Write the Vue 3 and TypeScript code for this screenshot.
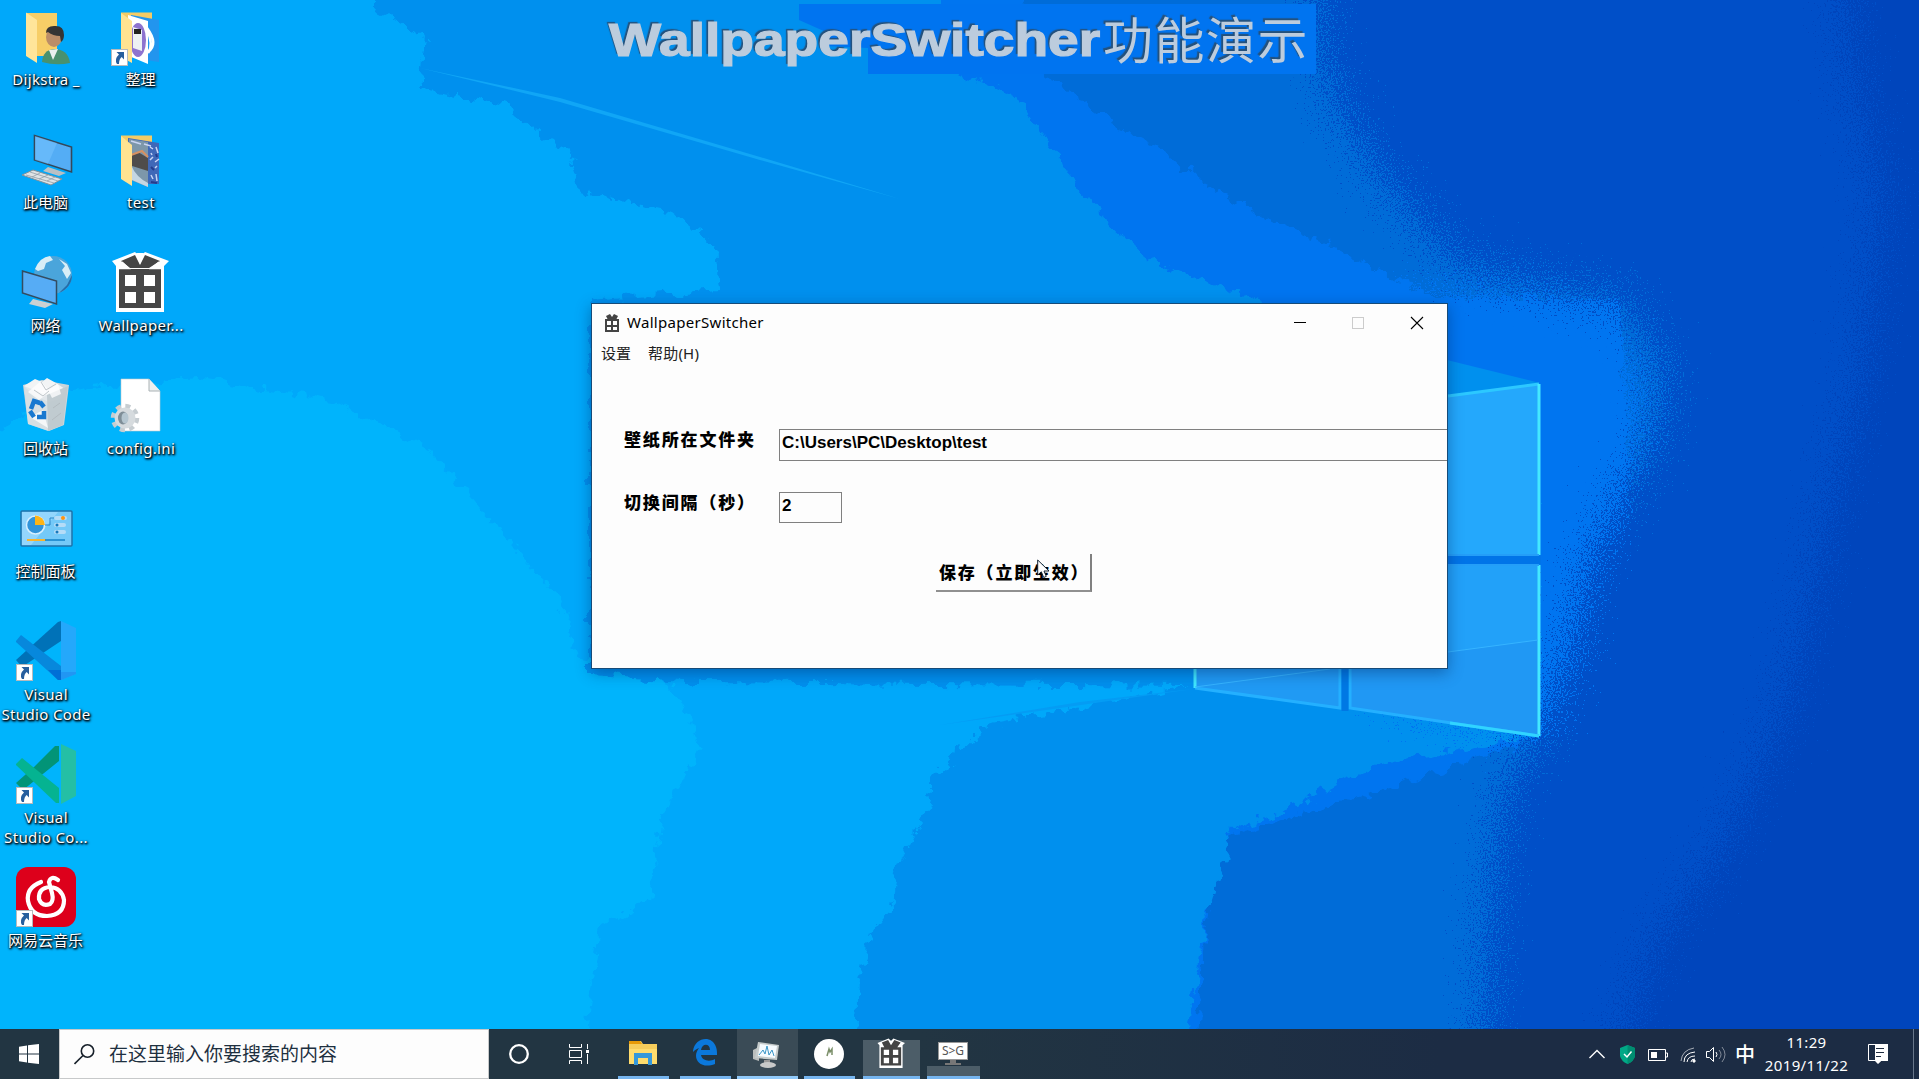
<script setup lang="ts">
import { ref } from 'vue'

interface DesktopItem {
  kind: string
  lines: string[]
  shortcut?: boolean
  latin?: boolean
}

const desktopItems: DesktopItem[] = [
  { kind: 'user', lines: ['Dijkstra _'], latin: true },
  { kind: 'pc', lines: ['此电脑'] },
  { kind: 'net', lines: ['网络'] },
  { kind: 'bin', lines: ['回收站'] },
  { kind: 'panel', lines: ['控制面板'] },
  { kind: 'code', lines: ['Visual', 'Studio Code'], shortcut: true, latin: true },
  { kind: 'insiders', lines: ['Visual', 'Studio Co...'], shortcut: true, latin: true },
  { kind: 'music', lines: ['网易云音乐'], shortcut: true },
  { kind: 'sort', lines: ['整理'], shortcut: true },
  { kind: 'test', lines: ['test'], latin: true },
  { kind: 'gift', lines: ['Wallpaper...'], latin: true },
  { kind: 'ini', lines: ['config.ini'], latin: true },
]

const tasks = ['explorer', 'edge', 'monitor', 'round', 'gift', 'sg']
const folder = ref('C:\\Users\\PC\\Desktop\\test')
const seconds = ref('2')
</script>

<template>
  <div class="screen">
    <main class="desktop">
      <svg class="wallpaper" viewBox="0 0 1919 1029" width="1919" height="1029" preserveAspectRatio="none">
        <defs>
          <filter id="grain" x="0" y="0" width="1919" height="1029" filterUnits="userSpaceOnUse">
            <feTurbulence type="fractalNoise" baseFrequency="0.6" numOctaves="2" seed="4" />
            <feDisplacementMap in="SourceGraphic" scale="150" xChannelSelector="R" yChannelSelector="G" />
          </filter>
          <filter id="rough" x="0" y="0" width="1919" height="1029" filterUnits="userSpaceOnUse">
            <feTurbulence type="fractalNoise" baseFrequency="0.08" numOctaves="3" seed="9" />
            <feDisplacementMap in="SourceGraphic" scale="20" xChannelSelector="R" yChannelSelector="G" />
          </filter>
        </defs>
        <rect width="1919" height="1029" fill="#00a8fa" />
        <g filter="url(#rough)">
          <path d="M-30 450L20 415 60 392 200 378 330 400 430 450 560 600 577 657 673 685 700 750 665 808 650 900 600 925 585 1060-30 1060Z" fill="#00b4fc" />
          <path d="M376-30L376 10 425 35 420 90 505 105 545 140 570 150 580 190 625 203 673 212 716 245 720 289 590 300 590 675 700 682 1190 686 990 724 975 737 933 775 928 808 898 867 893 907 872 933 859 979 855 1060 1960 1060 1960-30Z" fill="#0090ee" />
          <path d="M940-30L940 70 980 80 1020 98 1054 151 1080 190 1115 230 1158 263 1270 304 1350 330 1400 375 1540 385 1540 735 1392 762 1340 782 1297 805 1232 830 1220 880 1205 920 1185 1060 1960 1060 1960-30Z" fill="#0074f0" />
        </g>
        <path d="M1020-10L1045 75 1115 125 1167 151 1201 184 1280 223 1340 250 1427 296 1620 300 1640 720 1540 738 1400 785 1232 834 1212 900 1204 940 1198 1040 1929 1040 1929-10Z" fill="#006cd8" filter="url(#rough)" />
        <g filter="url(#grain)">
          <path d="M1310-80L1320 60 1350 130 1400 200 1460 265 1560 290 1625 300 1665 370 1655 440 1620 500 1590 560 1570 650 1540 730 1505 790 1490 900 1480 1110 1999 1110 1999-80Z" fill="#0050c8" />
          <path d="M1840-80L1850 60 1880 200 1860 380 1830 500 1810 600 1780 720 1720 850 1650 950 1600 1110 1999 1110 1999-80Z" fill="#0044bc" />
        </g>
        <g filter="url(#grain)">
          <path d="M1400 302Q1590 285 1635 380Q1645 450 1590 520Q1560 600 1545 690L1535 725 1400 700Z" fill="#0074f0" />
        </g>
        <path d="M420 68L560 102 760 160 900 199 760 157 560 98Z" fill="#10a6f6" />
        <path d="M1193 689L940 725 1080 702Z" fill="#049cf4" />
        <path d="M799 4L1316 4 1316 74 868 74 868 48 826 46 826 32 799 20Z" fill="#0074f0" />
        <path d="M1447 360L1540 383 1447 396Z" fill="#0090ee" />
        <g class="panes">
          <path d="M1448 396L1539 384V555H1448Z" fill="#24a8fc" />
          <path d="M1448 565H1539V736L1350 708V668H1448Z" fill="#2098f4" />
          <path d="M1448 565H1538V640L1448 652Z" fill="#24a6fc" opacity=".65" />
          <path d="M1195 668H1340V708L1195 688Z" fill="#209af4" />
          <path d="M1448 396L1539 384" stroke="#2cc8ff" stroke-width="3" fill="none" />
          <path d="M1539 384V555M1539 565V736" stroke="#44e8ff" stroke-width="3" fill="none" />
          <path d="M1539 736L1350 708V668M1340 668V708L1195 688" stroke="#24b0ff" stroke-width="3" fill="none" />
          <path d="M1539 736L1450 723" stroke="#30d4ff" stroke-width="3" />
          <path d="M1195 668V688" stroke="#40e8ff" stroke-width="3" />
          <path d="M1195 687L1330 669M1448 652L1538 640" stroke="#36b4ff" stroke-width="1" />
          <path d="M1448 555H1539M1448 565H1539" stroke="#249ef8" stroke-width="2" />
          <path d="M1448 560H1541" stroke="#0074e8" stroke-width="8" />
          <path d="M1345 668V711" stroke="#0078e4" stroke-width="7" />
        </g>
      </svg>

      <div class="banner"><span class="banner-latin">WallpaperSwitcher</span><span class="banner-cjk">功能演示</span></div>

      <div class="icons">
        <div v-for="item in desktopItems" :key="item.lines.join(' ')" class="item">
          <svg class="item-art" width="60" height="60" viewBox="0 0 60 60">
            <template v-if="item.kind === 'user'">
              <path d="M11 7H41V50H14Z" fill="#f7ce67" />
              <path d="M10 6.500L21 14V57L10 50Z" fill="#ffe59a" />
              <path d="M26 56Q27 44 38 43Q52 43 54 57Q40 60 26 56Z" fill="#49916e" />
              <path d="M33 44L37 54 42 43Z" fill="#e9f0ee" />
              <ellipse cx="38" cy="31" rx="8" ry="10" fill="#bb8d68" />
              <path d="M30 27Q30 20 38 20Q48 19 48 29Q48 34 45 36L44 30Q37 30 32 26Z" fill="#353434" />
            </template>
            <template v-else-if="item.kind === 'pc'">
              <path d="M18.500 6.500L55.500 18V43L18.500 31Z" fill="#54adf5" stroke="#35485a" stroke-width="1.600" />
              <path d="M19 7L41 14 32 35 19 31Z" fill="#77c5ff" opacity=".5" />
              <path d="M32 38L50 44 43 47 27 42Z" fill="#b9c0c4" />
              <path d="M6 46L17 41 46 50 35 56Z" fill="#dfe3e5" stroke="#81919a" />
              <path d="M10 46L38 54M14 43L42 52M16 48L24 44M23 50L32 46M31 52L39 48" stroke="#8795a0" stroke-width=".700" />
            </template>
            <g v-else-if="item.kind === 'net'" transform="translate(0 -6)">
              <circle cx="37" cy="29" r="19" fill="#4aa5db" />
              <path d="M19 23Q24 11 34 10L37 14 30 17 28 23 22 25ZM43 13L51 18 55 27 51 33 46 24 49 20Z" fill="#d8eef7" />
              <path d="M43 47Q56 41 56 29L51 39Z" fill="#266da7" />
              <path d="M6.500 25L40.500 35V58L6.500 47Z" fill="#56acf5" stroke="#344c60" stroke-width="1.500" />
              <path d="M17 53L37 58 29 62 13 58Z" fill="#ccd0d2" />
            </g>
            <g v-else-if="item.kind === 'bin'" transform="translate(0 -3)">
              <path d="M7 13L26 8 53 13 48 53 33 59 12 52Z" fill="#cbd5da" />
              <path d="M8 14L19 7 26 10 31 6 40 11 49 17 44 27 33 30 16 22Z" fill="#f2f4f5" />
              <path d="M8 14L31 23 52 14 47 53 32 59 12 52Z" fill="#dbe2e5" opacity=".75" />
              <path d="M31 23L52 14 47 53 32 59Z" fill="#bac5ca" opacity=".8" />
              <path d="M12 20L25 9 34 20 23 28ZM14 45L27 38 32 56ZM32 18L42 12 45 22 36 26Z" fill="#fff" opacity=".75" />
              <path d="M25 10L30 18 40 12M18 18L27 24 33 19M37 36L44 31M36 48L45 41" stroke="#b0b8bc" stroke-width=".800" fill="none" />
              <path d="M15 37L18 29 24 31M24 30L28 35M28 39L28 45 21 45M14 39L18 45" fill="none" stroke="#1878d0" stroke-width="4.500" />
            </g>
            <template v-else-if="item.kind === 'panel'">
              <rect x="5" y="13" width="51" height="35" rx="1" fill="#74c9f8" stroke="#1e73aa" stroke-width="1.500" />
              <path d="M6 14H42L15 47H6Z" fill="#a4ddff" opacity=".65" />
              <circle cx="19.500" cy="27" r="9" fill="#3194da" stroke="#d6efff" stroke-width="1.500" />
              <path d="M19 27V17.500A10 10 0 0 1 29 27Z" fill="#ffb416" />
              <path d="M29 27H34V20H39" fill="none" stroke="#2686c9" />
              <g fill="#b5dcf7"><rect x="38" y="18" width="13" height="4" rx="2" /><rect x="38" y="25" width="12" height="4" rx="2" /><rect x="38" y="32" width="12" height="4" rx="2" /></g>
              <circle cx="47" cy="20" r="2" fill="#ff930f" /><circle cx="41" cy="27" r="1.500" fill="#1678bd" /><circle cx="41" cy="34" r="1.500" fill="#1678bd" />
              <path d="M11 42H30" stroke="#f9b52e" stroke-width="2" /><path d="M29 42H49" stroke="#1280c9" stroke-width="1.500" />
            </template>
            <template v-else-if="item.kind === 'code'">
              <path d="M0 39L42 1 45 0V20L6 46Z" fill="#0072b8" />
              <path d="M0 20L5 14 45 45V59H42L0 21Z" fill="#0788dc" />
              <path d="M32 49H46V59L42 59Z" fill="#006fd6" />
              <path d="M45 0L60 7V53L45 59Z" fill="#24a8fb" /><path d="M45 51H60V53L45 59Z" fill="#2196f3" />
            </template>
            <template v-else-if="item.kind === 'insiders'">
              <path d="M0 39L18 23 39 2H43V17L7 46Z" fill="#029477" />
              <path d="M0 20L6 14 43 44V59H40L0 21Z" fill="#05b391" />
              <path d="M45 0L60 7V52L45 60Z" fill="#24bfa5" />
            </template>
            <template v-else-if="item.kind === 'music'">
              <rect width="60" height="60" rx="12" fill="#dd001b" />
              <path d="M25 15Q10 21 12 34Q15 49 31 49Q48 48 48 33Q46 21 34 20Q22 21 23 32Q26 40 34 37Q38 34 36 26L33 15Q35 8 42 13" fill="none" stroke="#fff" stroke-width="4.200" stroke-linecap="round" />
            </template>
            <template v-else-if="item.kind === 'sort'">
              <path d="M10 6.500H41V50H10Z" fill="#f4cb65" />
              <path d="M20 9L48 14V56L20 52Z" fill="#2295ee" /><path d="M17 9L37 15V58L18 50Z" fill="#fff" />
              <ellipse cx="27" cy="34" rx="8" ry="17" fill="#8e73cf" /><path d="M22 21L31 24V45L22 42Z" fill="#edf1f4" /><rect x="23" y="23" width="7" height="5" fill="#222" />
              <path d="M36 24Q43 39 37 47M36 22Q48 38 37 46" fill="none" stroke="#fff" stroke-width="2.500" />
              <path d="M10 7L21 15V57L10 51Z" fill="#ffe391" />
            </template>
            <template v-else-if="item.kind === 'test'">
              <path d="M10 6.500H41V50H10Z" fill="#f4cb65" />
              <path d="M17 9L48 14V55H38L17 49Z" fill="#3f68b8" /><path d="M18 10L37 13V58L17 50Z" fill="#7d97aa" />
              <path d="M18 28L27 23 37 29V42L18 36Z" fill="#4f4c4b" /><path d="M20 26L31 22 37 28" stroke="#d69162" stroke-width="2" fill="none" />
              <path d="M20 36Q25 48 37 54V58L21 51Z" fill="#c4d6e2" />
              <path d="M39 18L42 20M45 18L47 24M39 31L42 28M44 33L48 30M40 46L42 50M45 45L46 52M40 24L41 26M44 39L46 37M20 12L30 15M33 15L40 17" stroke="#c9d5f4" stroke-width="1.500" />
              <path d="M40 38L43 41M45 25L46 28M40 53L46 54" stroke="#243c8c" stroke-width="2" />
              <path d="M10 7L21 16V57L10 50Z" fill="#ffe391" />
            </template>
            <template v-else-if="item.kind === 'gift'">
              <path d="M1 9L24 0 29 5 34 0 58 9 53 14V60H5V14Z" fill="#fff" />
              <path d="M8 17H50V56H8Z" fill="#464646" />
              <path d="M10 9L24 3 29 13 34 3 49 9 38 16H19Z" fill="#464646" />
              <path d="M25 1L29 12 33 1Z" fill="#fff" />
              <path d="M8 16.500H18L11 10M50 16.500H40L48 10" fill="none" stroke="#fff" stroke-width="1.500" />
              <path d="M14 23H25V34H14ZM33 23H44V34H33ZM14 40H25V51H14ZM33 40H44V51H33Z" fill="#fff" />
            </template>
            <g v-else transform="translate(0 -6)">
              <path d="M10 10H38L49 22V62H10Z" fill="#fff" stroke="#bfc9cd" stroke-width=".600" />
              <path d="M38 10V22H49" fill="#eef0f0" stroke="#aab2b5" />
              <circle cx="14" cy="49" r="12" fill="none" stroke="#c6cdd1" stroke-width="4.500" stroke-dasharray="5 4.420" />
              <circle cx="14" cy="49" r="10.500" fill="#d6dbde" /><ellipse cx="12" cy="49" rx="5" ry="6.500" fill="#7f8e97" /><ellipse cx="14" cy="49" rx="3.500" ry="5.500" fill="#b5c6d0" />
            </g>
            <g v-if="item.shortcut">
              <rect x=".500" y="43.500" width="16" height="16" fill="#fff" stroke="#b6babd" />
              <path d="M5.500 46H13V53.500L10.700 51Q8 53 8 58H6Q3 53 8 48.500Z" fill="#275f9e" />
            </g>
          </svg>
          <div class="item-label" :class="{ latin: item.latin }"><span v-for="line in item.lines" :key="line">{{ line }}</span></div>
        </div>
      </div>

      <section class="window">
        <header class="titlebar">
          <svg class="title-icon" width="14" height="18" viewBox="0 0 14 18">
            <path d="M0 5H14V18H0Z" fill="#444" />
            <path d="M1 2L5 0 7 3 9 0 13 2 11 6H3Z" fill="#444" />
            <path d="M2 7H6V11H2ZM8 7H12V11H8ZM2 13H6V16H2ZM8 13H12V16H8Z" fill="#fff" />
          </svg>
          <span class="title-text">WallpaperSwitcher</span>
          <svg class="controls" width="153" height="38" viewBox="0 0 153 38" fill="none">
            <path d="M0 18.500H12" stroke="#000" /><rect x="58.500" y="13.500" width="11" height="11" stroke="#ccc" /><path d="M117 13L129 25M129 13L117 25" stroke="#000" stroke-width="1.100" />
          </svg>
        </header>
        <nav class="menu"><span>设置</span><span class="menu-help">帮助(H)</span></nav>
        <div class="row folder-row"><label>壁纸所在文件夹</label><div class="field wide">{{ folder }}</div></div>
        <div class="row time-row"><label>切换间隔（秒）</label><div class="field short">{{ seconds }}</div></div>
        <button class="save" type="button">保存（立即生效）</button>
      </section>
      <svg class="cursor" width="13" height="20" viewBox="0 0 13 20">
        <path d="M.700 1V16L4.300 12.800 6.700 18.500 9.300 17.400 7 12H12Z" fill="#fff" stroke="#102030" />
      </svg>
    </main>

    <footer class="taskbar">
      <div class="start">
        <svg width="20" height="20" viewBox="0 0 20 20" fill="#fff"><path d="M0 2.700L8 1.500V9.500H0ZM9 1.300L20 0V9.500H9ZM0 10.500H8V18.500L0 17.300ZM9 10.500H20V20L9 18.700Z" /></svg>
      </div>
      <div class="search">
        <svg width="21" height="21" viewBox="0 0 21 21" fill="none" stroke="#17202a" stroke-width="1.600"><circle cx="13.500" cy="7" r="6.200" /><path d="M9 11.500L.500 20" /></svg>
        <span>在这里输入你要搜索的内容</span>
      </div>
      <div class="system"><svg width="22" height="22" viewBox="0 0 22 22"><circle cx="11" cy="11" r="8.800" fill="none" stroke="#fff" stroke-width="2.300" /></svg></div>
      <div class="system view">
        <svg width="21" height="20" viewBox="0 0 21 20" fill="none" stroke="#fff"><path d="M1.500 0V3.500H13.500V0M1.500 6.500H13.500V13.500H1.500ZM1.500 20V16.500H13.500V20M19.500 0V5M19.500 10V20" /><rect x="18.500" y="6.500" width="2" height="2" fill="#fff" /></svg>
      </div>
      <div class="tasks">
        <div v-for="task in tasks" :key="task" class="task" :class="task">
          <svg v-if="task === 'explorer'" width="30" height="26" viewBox="0 0 30 26"><path d="M1 1H13L15 4H29V24H1Z" fill="#f6cd5b" /><path d="M1 1H12L14 4H1Z" fill="#e79a07" /><path d="M1 9H29V24H1Z" fill="#ffdc6d" /><path d="M6 13H24V25H20V18H10V25H6Z" fill="#3598db" /></svg>
          <svg v-else-if="task === 'edge'" width="26" height="27" viewBox="0 0 26 27"><path d="M1 12C3-2 20-4 24 8C25 11 25 13 25 16H9C10 22 18 23 23 20V25C8 31-1 19 7 9C4 10 2 12 1 13M9 11H18C18 4 10 4 9 11" fill="#0b78db" fill-rule="evenodd" /></svg>
          <svg v-else-if="task === 'monitor'" width="30" height="28" viewBox="0 0 30 28"><path d="M2 9L8 6V20L2 18Z" fill="#babdbc" /><path d="M7 1L28 4 26 19 4 17Z" fill="#c5cbcb" /><path d="M9 3L26 5 24 17 7 15Z" fill="#f5fbff" /><path d="M8 14L12 9 14 13 16 5 18 14 21 9 23 15" fill="none" stroke="#3996c8" /><path d="M13 19H19V22H13Z" fill="#999" /><ellipse cx="17" cy="24" rx="8" ry="3" fill="#c8c9c9" /></svg>
          <svg v-else-if="task === 'round'" width="30" height="30" viewBox="0 0 30 30"><circle cx="15" cy="15" r="15" fill="#fff" /><path d="M13 17L15 10 16 13 18 10V16" fill="none" stroke="#7b8f69" stroke-width="1.500" /></svg>
          <svg v-else-if="task === 'gift'" width="28" height="31" viewBox="0 0 58 62"><path d="M1 9L24 0 29 5 34 0 58 9 53 14V61H5V14Z" fill="#fff" /><path d="M8 18H50V56H8ZM10 8L23 3 29 14 36 3 49 8 42 18H15Z" fill="#444" /><path d="M14 23H25V34H14ZM33 23H44V34H33ZM14 40H25V51H14ZM33 40H44V51H33Z" fill="#fff" /></svg>
          <div v-else class="sg-icon"><span>S&gt;G</span><i></i><b></b></div>
        </div>
      </div>
      <div class="tray">
        <svg class="chevron" width="16" height="10" viewBox="0 0 16 10" fill="none" stroke="#fff" stroke-width="1.400"><path d="M.500 9L8 1.500 15.500 9" /></svg>
        <svg class="shield" width="15" height="19" viewBox="0 0 15 19"><path d="M7.500 0L15 3V11Q14 16 7.500 19Q1 16 0 11V3Z" fill="#00a886" /><path d="M7.500 0L15 3V11Q14 16 7.500 19Z" fill="#008d71" /><path d="M4 9L7 12 11.500 6.500" fill="none" stroke="#fff" stroke-width="1.500" /></svg>
        <svg class="battery" width="20" height="12" viewBox="0 0 20 12"><path d="M.500.500H17.500V11.500H.500ZM18 4H19.500V8H18" fill="none" stroke="#fff" /><path d="M3 3H9V9H3Z" fill="#fff" /></svg>
        <svg class="wifi" width="16" height="16" viewBox="0 0 16 16" fill="none" stroke="#fff"><path d="M1 14Q2 3 14 1" opacity=".6" /><path d="M4 15Q4 6 15 5M7 15Q8 9 15 9M11 15Q11 12 15 12" /><circle cx="14" cy="14" r="1.200" fill="#fff" /></svg>
        <svg class="volume" width="21" height="17" viewBox="0 0 21 17" fill="none" stroke="#fff"><path d="M.500 5.500H3.500L7.500 1.500V15.500L3.500 11.500H.500ZM10 6Q12 8.500 10 11" /><path d="M13 4Q17 8.500 13 13M16 1Q22 8.500 16 16" opacity=".45" /></svg>
        <span class="ime">中</span>
        <div class="clock"><span>11:29</span><span>2019/11/22</span></div>
        <svg class="notice" width="20" height="20" viewBox="0 0 20 20"><path d="M.500.500H19.500V16.500H13L10 19 8 16.500H.500Z" fill="none" stroke="#fff" /><path d="M7 0H20V17H13L10 20 7 17Z" fill="#fff" /><path d="M8 4.500H16M8 8.500H16M8 12.500H13" stroke="#1d2b40" /></svg>
        <div class="show-desktop"></div>
      </div>
    </footer>
  </div>
</template>

<style>
body { margin: 0; overflow: hidden; }
</style>

<style scoped>
.screen { width: 1919px; height: 1079px; display: flex; flex-direction: column; overflow: hidden; font-family: "Noto Sans", "Noto Sans CJK SC", sans-serif; }
.desktop { position: relative; height: 1029px; overflow: hidden; }
.wallpaper { position: absolute; inset: 0; }
.banner { position: absolute; left: 609px; top: 0; width: 707px; height: 76px; display: flex; align-items: flex-start; color: #bcccdd; text-shadow: -2px -2px 1px #24517b; white-space: nowrap; }
.banner-latin { flex: none; width: 494px; margin-top: 13px; font: bold 47px/54px "Liberation Sans", sans-serif; transform: scaleX(1.173); transform-origin: 0 0; -webkit-text-stroke: 1.200px #bcccdd; }
.banner-cjk { flex: none; font: 400 50px/74px "Noto Sans CJK SC", sans-serif; letter-spacing: 1.500px; }
.icons { position: relative; display: grid; grid-template-rows: repeat(8, 123px); grid-auto-flow: column; grid-auto-columns: 95px; width: 190px; margin-left: -2px; }
.item { display: flex; flex-direction: column; align-items: center; padding-top: 6px; }
.item-art { overflow: visible; flex: none; }
.item-label { display: flex; flex-direction: column; align-items: center; margin-top: 3px; color: #fff; font-size: 15px; line-height: 20px; white-space: nowrap; text-shadow: 1px 1px 2px #000, 1px 1px 3px #000, 0 1px 2px #002b55; }
.item-label.latin { letter-spacing: .350px; margin-left: 1px; }
.window { position: absolute; left: 591px; top: 303px; width: 857px; height: 366px; box-sizing: border-box; border: 1px solid #164b79; background: #fdfdfd; box-shadow: 0 4px 14px rgba(0, 35, 90, .42); overflow: hidden; color: #000; }
.titlebar { height: 38px; display: flex; align-items: center; }
.title-icon { margin-left: 13px; }
.title-text { margin: -2px 0 0 8px; font-size: 15px; letter-spacing: .300px; }
.controls { margin-left: auto; }
.menu { display: flex; height: 24px; padding-left: 9px; font-size: 15px; line-height: 22px; color: #222; }
.menu-help { margin-left: 17px; letter-spacing: .200px; }
.row { display: flex; }
.row label { width: 155px; padding-left: 32px; font: 900 17px/22px "Noto Sans CJK SC", sans-serif; letter-spacing: 1.850px; white-space: nowrap; flex: none; }
.folder-row { margin-top: 62px; }
.time-row { margin-top: 30px; }
.field { box-sizing: border-box; height: 32px; margin-top: 1px; padding: 3px 2px; border: 1.500px solid #808080; font: bold 17px/20px "Liberation Sans", sans-serif; white-space: nowrap; }
.wide { width: 690px; flex: none; }
.short { width: 63px; height: 31px; }
.save { display: block; width: 156px; height: 38px; margin: 31px 0 0 344px; padding: 0 0 2px 3px; border: 0; border-right: 2px solid #808080; border-bottom: 2px solid #909090; background: #fdfdfd; font: 900 17px/31px "Noto Sans CJK SC", sans-serif; letter-spacing: 1.800px; text-align: left; white-space: nowrap; color: #000; }
.cursor { position: absolute; left: 1037px; top: 559px; }
.taskbar { display: flex; height: 50px; background: linear-gradient(90deg, #223542 0%, #223542 48%, #1c2c44 75%, #1c2c44 100%); color: #fff; }
.start { box-sizing: border-box; width: 59px; padding-right: 2px; display: flex; align-items: center; justify-content: center; }
.search { box-sizing: border-box; width: 430px; border: 1px solid #c7c9ca; background: #fdfdfd; display: flex; align-items: center; padding-left: 14px; color: #1e3040; }
.search span { margin: -2px 0 0 14px; font: 19px/30px "Noto Sans CJK SC", sans-serif; }
.system { width: 60px; display: flex; justify-content: center; align-items: center; }
.view { width: 63px; box-sizing: border-box; padding-right: 4px; }
.tasks { display: flex; align-items: flex-end; }
.task { box-sizing: border-box; width: 51px; height: 50px; margin: 0 5.500px; border-bottom: 3px solid #76b5ef; display: flex; align-items: center; justify-content: center; }
.monitor { width: 61px; margin: 0 .500px; background: #3a4b56; border-color: #91cafa; padding-top: 4px; }
.monitor svg { margin-right: 2px; }
.task.round { padding-top: 3px; }
.task.gift { width: 57px; height: 39px; margin: 0 2.500px; background: #4c5d68; align-items: flex-end; padding-bottom: 7px; }
.task.gift svg { overflow: visible; }
.task.sg { width: 53px; height: 13px; margin: 0 4.500px; background: #4c5d68; align-items: flex-end; }
.sg-icon { display: flex; flex-direction: column; align-items: center; padding-bottom: 11px; }
.sg-icon span { box-sizing: border-box; width: 30px; height: 18px; border: 1px solid #999; background: #fff; color: #555; text-align: center; font: 12px/16px "Noto Sans", sans-serif; }
.sg-icon i { width: 6px; height: 3px; background: #777; }
.sg-icon b { width: 16px; height: 2px; background: #777; }
.tray { margin-left: auto; width: 331px; display: flex; align-items: center; }
.chevron { margin-left: 1px; }
.shield { margin-left: 15px; }
.battery { margin-left: 13px; margin-top: 2px; }
.wifi { margin-left: 12px; margin-top: 2px; }
.volume { margin-left: 10px; }
.ime { margin-left: 8px; font: 500 20px/30px "Noto Sans CJK SC", sans-serif; }
.clock { display: flex; flex-direction: column; width: 85px; margin: -1px 0 0 9px; align-items: center; font-size: 15px; line-height: 23px; letter-spacing: .350px; }
.notice { margin-left: 19px; }
.show-desktop { width: 5px; height: 50px; margin-left: auto; border-left: 1px solid #68778b; }
.tray svg, .system svg, .task svg { flex: none; }
</style>
